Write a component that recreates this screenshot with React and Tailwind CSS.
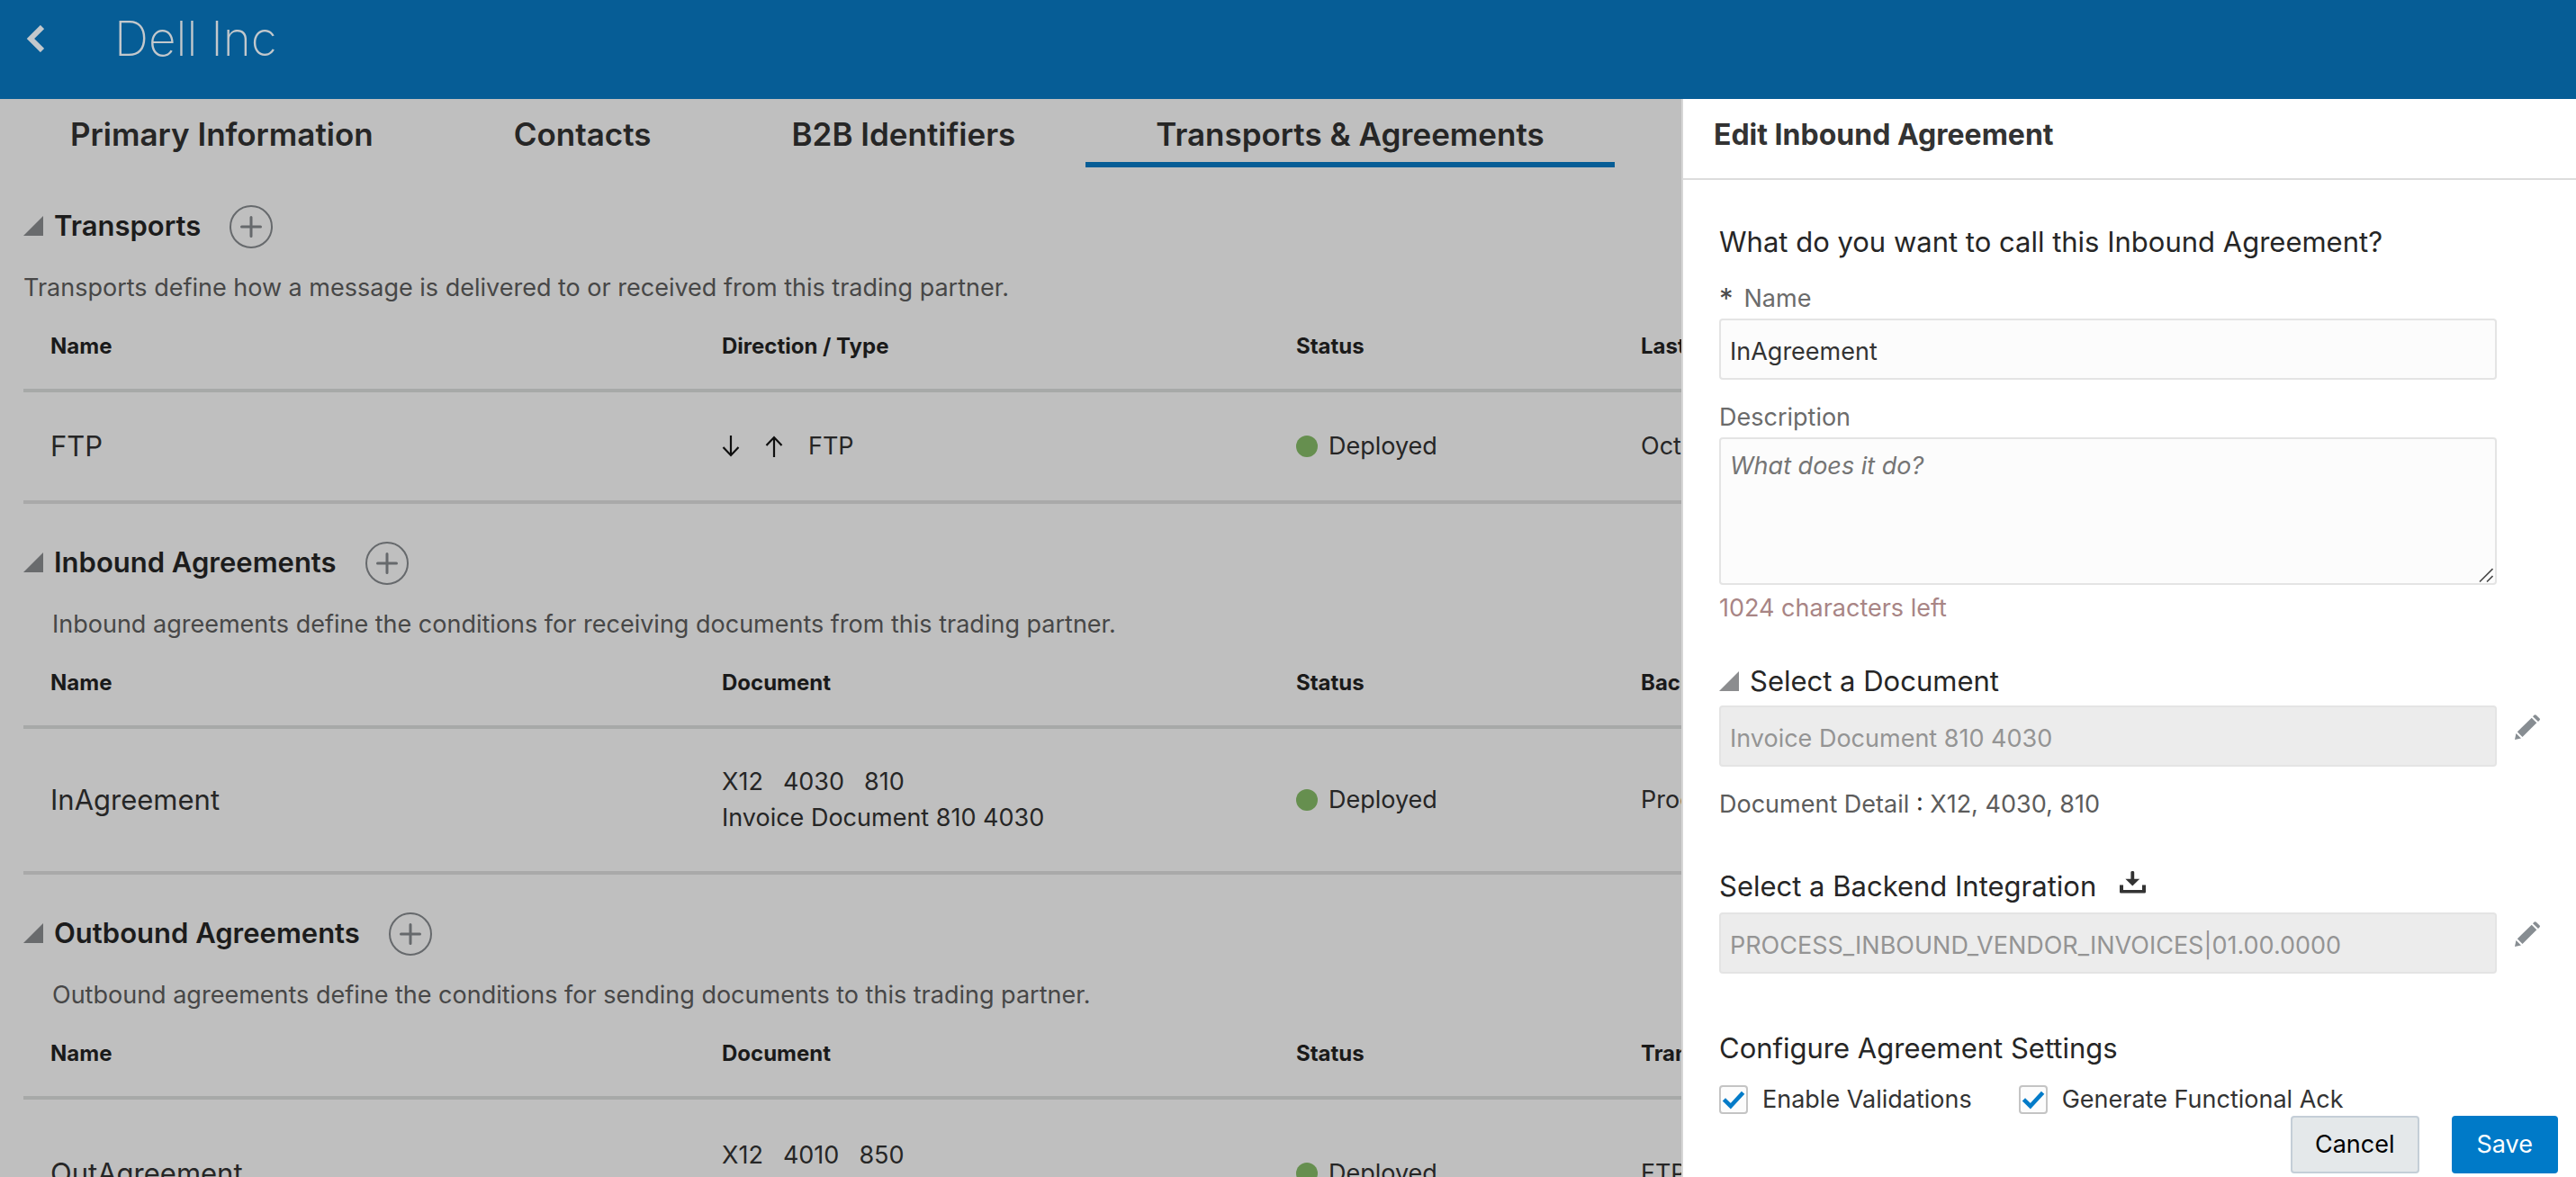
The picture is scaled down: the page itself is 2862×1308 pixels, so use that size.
import React from "react";

const TABS = ["Primary Information", "Contacts", "B2B Identifiers", "Transports & Agreements"];

function ChevronLeft() {
  return (
    <svg className="h-[30px] w-5" viewBox="0 0 20 30" fill="none" stroke="currentColor" strokeWidth="6" aria-hidden="true">
      <path d="M18 2 L5 15 L18 28" />
    </svg>
  );
}

function Triangle() {
  return (
    <svg className="size-[22px]" viewBox="0 0 22 22" fill="currentColor" aria-hidden="true">
      <path d="M22 0 V22 H0 Z" />
    </svg>
  );
}

function Plus() {
  return (
    <svg className="size-6" viewBox="0 0 24 24" fill="none" stroke="currentColor" strokeWidth="3" strokeLinecap="round" aria-hidden="true">
      <path d="M12 1.5 V22.5 M1.5 12 H22.5" />
    </svg>
  );
}

function Arrow({ up }) {
  return (
    <svg className="h-6 w-5" viewBox="0 0 20 24" fill="none" stroke="#0f0f0f" strokeWidth="2.2" aria-hidden="true">
      {up ? <path d="M10 24 V2 M1.5 11 L10 2 L18.5 11" /> : <path d="M10 0 V22 M1.5 13 L10 22 L18.5 13" />}
    </svg>
  );
}

function Pencil() {
  return (
    <svg className="size-7" viewBox="0 0 28 28" fill="#878d92" aria-hidden="true">
      <path d="M20 2.2 L21.4 0.8 Q22.6 -0.4 23.8 0.8 L27.4 4.2 Q28.6 5.4 27.4 6.6 L26 8 Z" />
      <path d="M18.7 3.7 L24.3 9.3 L8.5 25 L2.8 19.3 Z" />
      <path d="M1.4 21 L7 26.6 L0 28 Z" />
    </svg>
  );
}

function Download() {
  return (
    <svg className="h-[25px] w-[29px]" viewBox="0 0 29 25" fill="#333333" aria-hidden="true">
      <path d="M12.4 1.2 Q12.4 0 14.3 0 Q16.2 0 16.2 1.2 V8.8 H22.2 L14.3 16.6 L6.4 8.8 H12.4 Z" />
      <path d="M0 15.5 H4 V21 H25 V15.5 H29 V23.2 Q29 24.5 27.7 24.5 H1.3 Q0 24.5 0 23.2 Z" />
    </svg>
  );
}

function Status() {
  return (
    <div className="flex items-center gap-3">
      <span className="size-6 rounded-full bg-[#668f4f]" />
      Deployed
    </div>
  );
}

function Document({ codes, name }) {
  return (
    <>
      <div className="flex gap-[22px]">
        {codes.map((c) => (
          <span key={c}>{c}</span>
        ))}
      </div>
      <div>{name}</div>
    </>
  );
}

function Section({ title, description, indent, columns, cells, rowClass }) {
  return (
    <section className="mt-[42px] pl-[26px]">
      <div className="flex items-start">
        <button aria-label={"Collapse " + title} className="mt-3 text-[#696b6d]">
          <Triangle />
        </button>
        <h2 className="ml-3 text-[31px] leading-[46px] font-semibold text-[#1c1c1c]">{title}</h2>
        <button
          aria-label={"Add to " + title}
          className="ml-8 flex size-12 items-center justify-center rounded-full border-2 border-[#66696c] text-[#66696c]"
        >
          <Plus />
        </button>
      </div>
      <p className={indent ? "mt-6 pl-8 text-[#474747]" : "mt-6 text-[#474747]"}>{description}</p>
      <table className="w-full table-fixed border-separate border-spacing-0 text-left">
        <thead>
          <tr className="text-2xl leading-9 text-[#1a1a1a]">
            {columns.map((c, i) => (
              <th
                key={c}
                scope="col"
                className={
                  "overflow-hidden border-b-4 border-[#a7a9a8] pt-[27px] pb-[29px] pl-[30px] font-bold whitespace-nowrap " +
                  ["w-[746px]", "w-[638px]", "w-[383px]", ""][i]
                }
              >
                {c}
              </th>
            ))}
          </tr>
        </thead>
        <tbody>
          <tr className="text-[#262626]">
            {cells.map((c, i) => (
              <td
                key={i}
                className={
                  "overflow-hidden border-b-4 border-[#a9a9a9] pl-[30px] align-middle whitespace-nowrap " +
                  rowClass +
                  (i === 0 ? " text-[31px]" : "")
                }
              >
                {c}
              </td>
            ))}
          </tr>
        </tbody>
      </table>
    </section>
  );
}

function EditButton({ label }) {
  return (
    <button type="button" aria-label={label} className="mt-[10px] ml-5">
      <Pencil />
    </button>
  );
}

function CheckBox({ label }) {
  return (
    <label className="flex h-8 items-center gap-4 text-[#333333]">
      <span className="relative flex size-8">
        <input
          type="checkbox"
          defaultChecked
          className="peer size-8 appearance-none rounded border-2 border-[#c4c4c4] bg-[#fcfcfc]"
        />
        <svg
          className="pointer-events-none absolute inset-0 hidden size-8 peer-checked:block"
          viewBox="0 0 32 32"
          fill="none"
          stroke="#037bc8"
          strokeWidth="4.6"
          aria-hidden="true"
        >
          <path d="M5.4 15.8 L12.8 23.2 L26.6 8.2" />
        </svg>
      </span>
      {label}
    </label>
  );
}

function Panel() {
  return (
    <aside className="flex w-[994px] max-w-full shrink-0 flex-col border-l-2 border-[#d6d6d6] bg-white">
      <h2 className="border-b-2 border-[#dcdcdc] pt-4 pb-6 pl-[34px] text-[32px] leading-[48px] font-bold text-[#333333]">
        Edit Inbound Agreement
      </h2>
      <form className="flex min-h-0 flex-1 flex-col" onSubmit={(e) => e.preventDefault()}>
        <div className="min-h-0 flex-1 pt-[45px] pl-10">
          <div className="pr-[88px]">
            <h3 className="text-[31px] leading-[48px] text-[#262626]">What do you want to call this Inbound Agreement?</h3>
            <label htmlFor="agreement-name" className="mt-[19px] flex gap-3 text-[#6b6b6b]">
              <span className="text-[31px] text-[#4a4a4a]">*</span>
              Name
            </label>
            <input
              id="agreement-name"
              defaultValue="InAgreement"
              className="mt-0.5 block h-[68px] w-full rounded border-2 border-[#e4e4e4] bg-[#fcfcfc] px-[10px] pt-1 text-[#333333]"
            />
            <label htmlFor="agreement-description" className="mt-[22px] block text-[#6b6b6b]">
              Description
            </label>
            <div className="relative mt-0.5">
              <textarea
                id="agreement-description"
                placeholder="What does it do?"
                className="block h-[164px] w-full rounded border-2 border-[#e4e4e4] bg-[#fcfcfc] px-[10px] pt-[10px] text-[#333333] placeholder:text-[#757575] placeholder:italic [&::-webkit-resizer]:hidden"
              />
              <svg
                className="pointer-events-none absolute right-1 bottom-[3px] size-4"
                viewBox="0 0 16 16"
                fill="none"
                stroke="#4a4a4a"
                strokeWidth="1.6"
                aria-hidden="true"
              >
                <path d="M1 15.5 L15.5 1 M9 15.5 L15.5 9" />
              </svg>
            </div>
            <p className="mt-1.5 text-[#a88585]">1024 characters left</p>
          </div>

          <div className="mt-[37px] flex items-start gap-3">
            <button type="button" aria-label="Collapse Select a Document" className="mt-[13px] text-[#8c8d8f]">
              <Triangle />
            </button>
            <label htmlFor="document" className="text-[31px] leading-[48px] text-[#262626]">
              Select a Document
            </label>
          </div>
          <div className="mt-[3px] flex items-start pr-10">
            <input
              id="document"
              disabled
              defaultValue="Invoice Document 810 4030"
              className="h-[68px] min-w-0 flex-1 rounded border-2 border-[#e4e4e4] bg-[#ececec] px-[10px] pt-1 text-[#949494]"
            />
            <EditButton label="Edit document" />
          </div>
          <p className="mt-[22px] text-[#5c5c5c]">
            Document Detail <span className="text-[#333333]">:</span> X12, 4030, 810
          </p>

          <div className="mt-[47px] flex items-start gap-[26px]">
            <label htmlFor="integration" className="text-[31px] leading-[48px] text-[#262626]">
              Select a Backend Integration
            </label>
            <button type="button" aria-label="Import integration" className="mt-[7px]">
              <Download />
            </button>
          </div>
          <div className="mt-[5px] flex items-start pr-10">
            <input
              id="integration"
              disabled
              defaultValue="PROCESS_INBOUND_VENDOR_INVOICES|01.00.0000"
              className="h-[68px] min-w-0 flex-1 rounded border-2 border-[#e4e4e4] bg-[#ececec] px-[10px] pt-1 text-[#949494]"
            />
            <EditButton label="Edit integration" />
          </div>

          <h3 className="mt-[59px] text-[31px] leading-[48px] text-[#262626]">Configure Agreement Settings</h3>
          <div className="mt-[17px] flex gap-[52px]">
            <CheckBox label="Enable Validations" />
            <CheckBox label="Generate Functional Ack" />
          </div>
        </div>
        <div className="flex justify-end gap-9 pr-5 pb-1">
          <button type="button" className="h-16 rounded border-2 border-[#c4ced7] bg-[#e4e8ea] px-[25px] text-black">
            Cancel
          </button>
          <button type="submit" className="h-16 rounded bg-[#007ac8] px-7 text-white">
            Save
          </button>
        </div>
      </form>
    </aside>
  );
}

export default function App() {
  return (
    <div className="flex h-screen flex-col overflow-hidden bg-[#bfbfbf] font-[Inter,sans-serif] text-[27px] leading-10">
      <header className="flex h-[110px] shrink-0 items-start bg-[#065d96] pt-[11px] pl-[29px] text-[#c3c8cc]">
        <button aria-label="Back" className="flex h-16 items-center">
          <ChevronLeft />
        </button>
        <h1 className="ml-[78px] text-[53px] leading-[64px] font-extralight">Dell Inc</h1>
      </header>
      <div className="flex min-h-0 flex-1">
        <main className="min-w-0 flex-1 overflow-hidden">
          <div role="tablist" className="flex">
            {TABS.map((t, i) => (
              <button
                key={t}
                role="tab"
                aria-selected={i === 3}
                className={
                  "border-b-[6px] px-[78px] pt-[15px] pb-[7px] text-[35px] leading-[48px] font-semibold whitespace-nowrap text-[#262626] " +
                  (i === 3 ? "border-[#065d96]" : "border-transparent")
                }
              >
                {t}
              </button>
            ))}
          </div>
          <Section
            title="Transports"
            description="Transports define how a message is delivered to or received from this trading partner."
            columns={["Name", "Direction / Type", "Status", "Last Updated"]}
            rowClass="h-[124px]"
            cells={[
              "FTP",
              <div className="flex items-center gap-7">
                <Arrow />
                <Arrow up />
                <span>FTP</span>
              </div>,
              <Status />,
              "Oct",
            ]}
          />
          <Section
            indent
            title="Inbound Agreements"
            description="Inbound agreements define the conditions for receiving documents from this trading partner."
            columns={["Name", "Document", "Status", "Backend"]}
            rowClass="h-[162px]"
            cells={[
              "InAgreement",
              <Document codes={["X12", "4030", "810"]} name="Invoice Document 810 4030" />,
              <Status />,
              "Process",
            ]}
          />
          <Section
            indent
            title="Outbound Agreements"
            description="Outbound agreements define the conditions for sending documents to this trading partner."
            columns={["Name", "Document", "Status", "Transport"]}
            rowClass="h-[168px]"
            cells={[
              "OutAgreement",
              <Document codes={["X12", "4010", "850"]} name="Purchase Order 850 4010" />,
              <Status />,
              "FTP",
            ]}
          />
        </main>
        <Panel />
      </div>
    </div>
  );
}
